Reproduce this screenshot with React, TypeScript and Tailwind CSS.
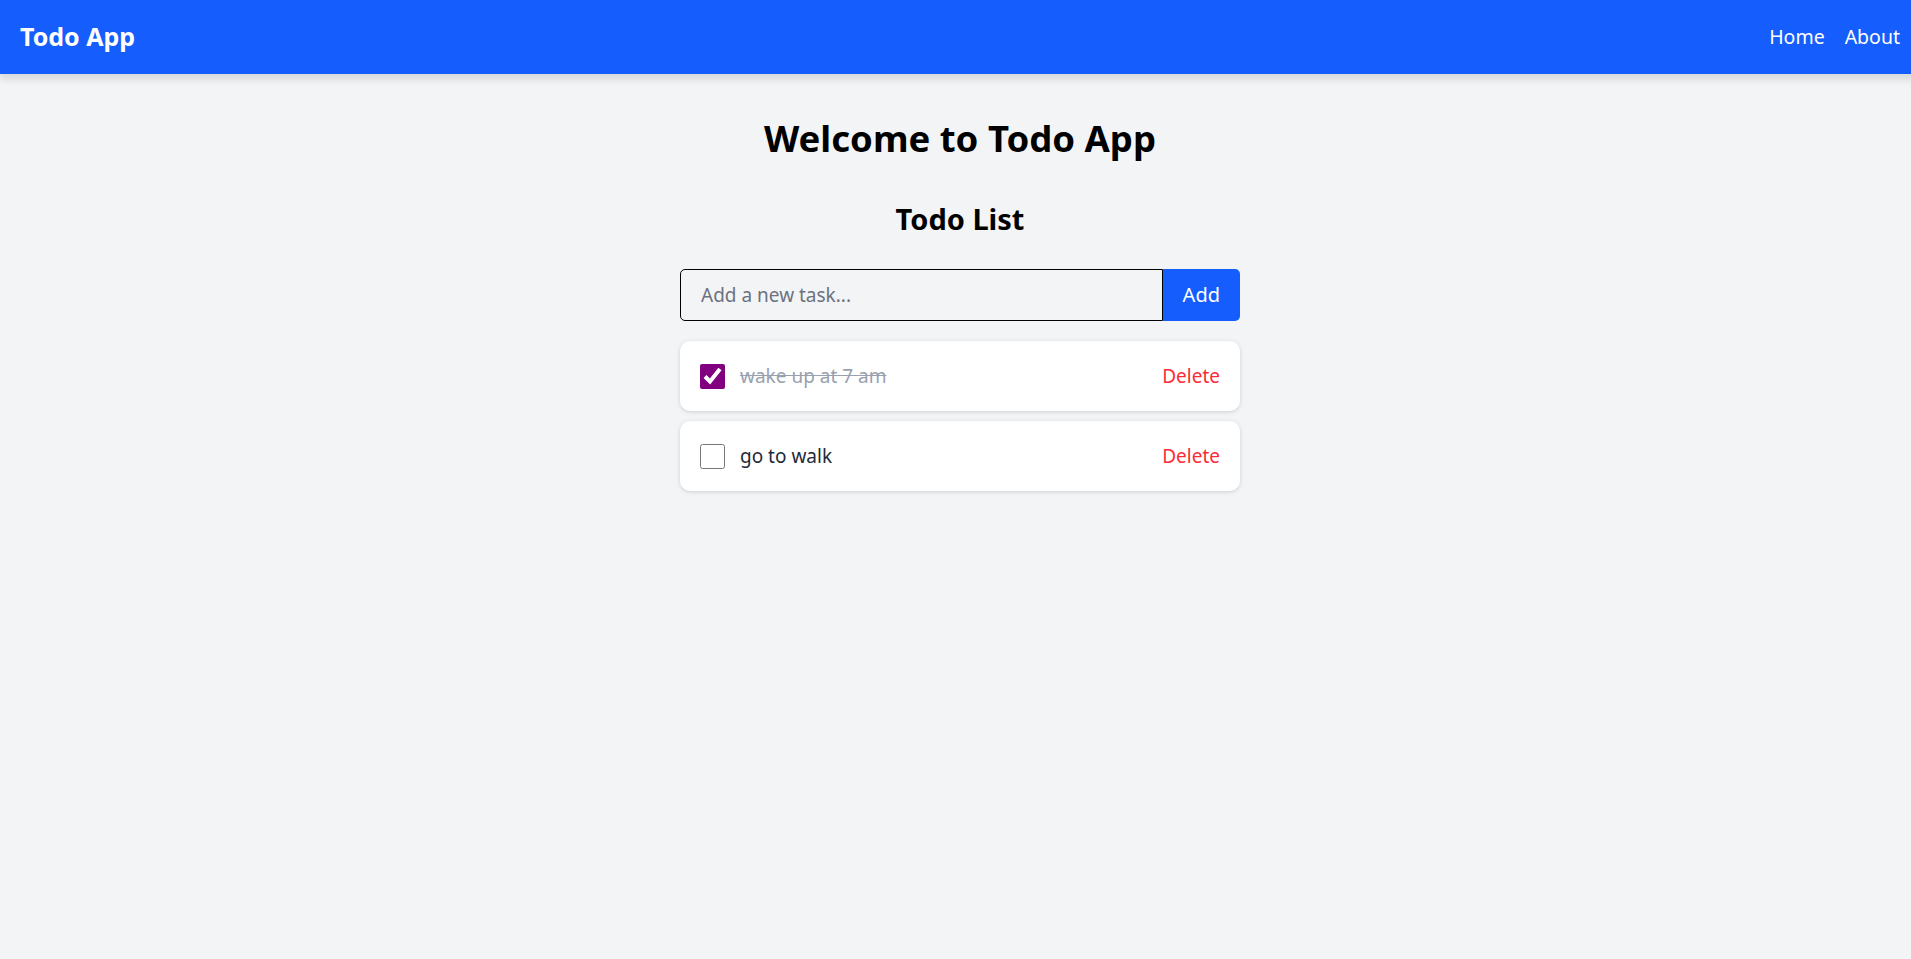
import { useState } from "react";

type Todo = {
  id: number;
  text: string;
  done: boolean;
};

const initialTodos: Todo[] = [
  { id: 1, text: "wake up at 7 am", done: true },
  { id: 2, text: "go to walk", done: false },
];

function Navbar() {
  return (
    <nav className="h-[74px] bg-[#155dfc] flex items-center justify-between px-5 shadow-[0_5px_8px_rgba(0,0,0,0.12)]">
      <span className="text-[25px] font-bold text-white">Todo App</span>
      <div className="flex items-center gap-5 text-[19.5px] text-white">
        <a href="#">Home</a>
        <a href="#">About</a>
      </div>
    </nav>
  );
}

export default function App() {
  const [todos, setTodos] = useState<Todo[]>(initialTodos);
  const [task, setTask] = useState("");

  const addTodo = () => {
    if (!task.trim()) return;
    setTodos([...todos, { id: Date.now(), text: task, done: false }]);
    setTask("");
  };

  const toggle = (id: number) =>
    setTodos(todos.map((t) => (t.id === id ? { ...t, done: !t.done } : t)));

  const remove = (id: number) => setTodos(todos.filter((t) => t.id !== id));

  return (
    <div className="w-screen h-screen overflow-hidden bg-[#f3f4f6]">
      <div className="w-[1920px] min-h-screen font-['Noto_Sans',sans-serif]">
        <Navbar />

        <main className="flex flex-col items-center">
          <h1 className="mt-[39px] text-[36.5px] leading-[50px] font-bold text-black">
            Welcome to Todo App
          </h1>

          <div className="w-[560px] mt-[36px]">
            <h2 className="text-[29px] leading-[40px] font-bold text-center text-black mb-[30px]">
              Todo List
            </h2>

            {/* input row */}
            <div className="flex">
              <input
                value={task}
                onChange={(e) => setTask(e.target.value)}
                placeholder="Add a new task..."
                className="flex-1 h-[52px] px-5 text-[19px] bg-transparent border border-black rounded-l-[5px] outline-none placeholder:text-[#6b7280]"
              />
              <button
                onClick={addTodo}
                className="h-[52px] px-5 bg-[#155dfc] text-white text-[20px] rounded-r-[5px]"
              >
                Add
              </button>
            </div>

            <ul className="mt-5 flex flex-col gap-[10px]">
              {todos.map((todo) => (
                <li
                  key={todo.id}
                  className="h-[70px] bg-white rounded-[10px] shadow-[0_1px_4px_rgba(0,0,0,0.15)] flex items-center justify-between px-5"
                >
                  <div className="flex items-center gap-[15px]">
                    <input
                      type="checkbox"
                      checked={todo.done}
                      onChange={() => toggle(todo.id)}
                      className="w-[25px] h-[25px] accent-[purple]"
                    />
                    <span
                      className={
                        todo.done
                          ? "text-[19px] text-[#99a1af] line-through"
                          : "text-[19px] text-[#1e2939]"
                      }
                    >
                      {todo.text}
                    </span>
                  </div>
                  <button
                    onClick={() => remove(todo.id)}
                    className="text-[19px] text-[#fb2c36]"
                  >
                    Delete
                  </button>
                </li>
              ))}
            </ul>
          </div>
        </main>
      </div>
    </div>
  );
}
